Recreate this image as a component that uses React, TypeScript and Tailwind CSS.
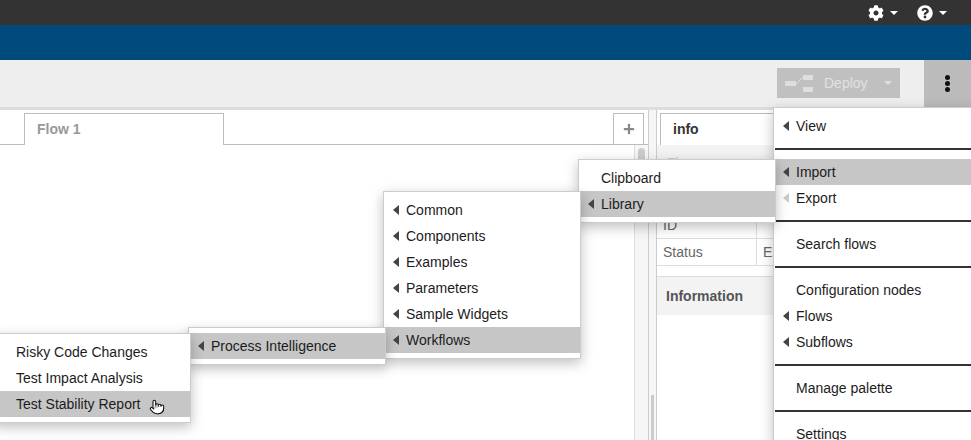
import React from 'react';
import { FaCog, FaQuestionCircle, FaPlus } from 'react-icons/fa';
import { Pointer } from 'lucide-react';

type Item = { label: string; sub?: boolean; active?: boolean; faded?: boolean; cursor?: boolean } | 'divider';

const CaretLeft = ({ className }: { className: string }) => (
  <svg viewBox="0 0 6 10" className={className}>
    <path d="M0 5 L6 0 L6 10 Z" fill="currentColor" />
  </svg>
);

const CaretDown = ({ className }: { className: string }) => (
  <svg viewBox="0 0 10 5" className={className}>
    <path d="M0 0 L10 0 L5 5 Z" fill="currentColor" />
  </svg>
);

const MenuRow = ({ item }: { item: Exclude<Item, 'divider'> }) => (
  <div className={`relative flex h-[26px] items-center pl-[22px] text-[14px] text-[#1c1c1c] ${item.active ? 'bg-[#c6c6c6]' : ''}`}>
    {item.sub && (
      <CaretLeft className={`absolute left-[9px] top-[8px] h-[10px] w-[6px] ${item.faded ? 'text-[#ccc]' : 'text-[#444]'}`} />
    )}
    <span>{item.label}</span>
    {item.cursor && (
      <Pointer className="ml-[8px] mt-[6px] h-[18px] w-[16px] fill-white text-[#111]" strokeWidth={1.6} />
    )}
  </div>
);

const Menu = ({ items, className }: { items: Item[]; className: string }) => (
  <div className={`absolute border border-[#ccc] bg-white py-[5px] shadow-[0_4px_12px_rgba(0,0,0,0.25)] ${className}`}>
    {items.map((item, i) =>
      item === 'divider' ? (
        <div key={i} className="flex h-[20px] items-center pl-[1px]">
          <div className="h-[2px] w-full bg-[#333]" />
        </div>
      ) : (
        <MenuRow key={i} item={item} />
      ),
    )}
  </div>
);

export default function App() {
  return (
    <div className="relative flex h-[440px] w-[971px] flex-col overflow-hidden bg-white font-['Liberation_Sans',Arial,sans-serif]">
      {/* header */}
      <div className="flex h-[25px] items-center justify-end gap-[19px] bg-[#333] pr-[24px] text-white">
        <div className="flex items-center gap-[6px]">
          <FaCog className="h-[16px] w-[16px]" />
          <CaretDown className="h-[4px] w-[8px]" />
        </div>
        <div className="flex items-center gap-[6px]">
          <FaQuestionCircle className="h-[16px] w-[16px]" />
          <CaretDown className="h-[4px] w-[8px]" />
        </div>
      </div>
      <div className="h-[35px] bg-[#004a7c]" />

      {/* toolbar */}
      <div className="flex h-[50px] items-start justify-end border-b-[3px] border-[#ddd] bg-[#eee]">
        <div className="mr-[24px] mt-[8px] flex h-[30px] w-[123px] items-center bg-[#c0c0c0] pl-[8px] text-[14px] text-[#e0e0e0]">
          <svg width="28" height="17" viewBox="0 0 28 17" className="text-[#dedede]">
            <rect x="0" y="6" width="11" height="5" fill="currentColor" />
            <path d="M11 9 L18 2" stroke="currentColor" strokeWidth="1" fill="none" />
            <rect x="18" y="0" width="10" height="5" fill="currentColor" />
            <rect x="18" y="12" width="10" height="5" fill="currentColor" />
          </svg>
          <span className="ml-[11px]">Deploy</span>
          <CaretDown className="ml-[16px] h-[4px] w-[8px]" />
        </div>
        <div className="flex h-[47px] w-[47px] items-center justify-center bg-[#bbb] pb-[1px]">
          <div className="flex flex-col gap-[1px]">
            <div className="h-[5px] w-[5px] rounded-full bg-[#111]" />
            <div className="h-[5px] w-[5px] rounded-full bg-[#111]" />
            <div className="h-[5px] w-[5px] rounded-full bg-[#111]" />
          </div>
        </div>
      </div>

      <div className="flex flex-1">
        {/* workspace */}
        <div className="flex w-[648px] flex-col">
          <div className="flex h-[35px] items-end border-b border-[#bbb] pr-[4px]">
            <div className="ml-[24px] -mb-px flex h-[32px] w-[200px] items-center border border-b-0 border-[#bbb] bg-white pl-[12px] text-[14px] font-bold text-[#999]">
              Flow 1
            </div>
            <div className="ml-auto flex h-[31px] w-[31px] items-center justify-center border border-b-0 border-[#bbb] bg-white text-[#888]">
              <FaPlus className="h-[12px] w-[12px]" />
            </div>
          </div>
          <div className="flex flex-1 justify-end">
            <div className="w-[14px] border-l border-[#ddd] bg-[#f6f6f6] px-[3px] pt-[3px]">
              <div className="h-[60px] rounded-[4px] bg-[#ccc]" />
            </div>
          </div>
        </div>

        {/* separator */}
        <div className="flex w-[9px] flex-col justify-end border-x border-[#ccc] bg-[#f6f6f6] pl-[2px]">
          <div className="h-[45px] w-[3px] bg-[#ccc]" />
        </div>

        {/* sidebar */}
        <div className="flex flex-1 flex-col">
          <div className="h-[35px] pl-[3px] pt-[3px]">
            <div className="flex h-[32px] w-[200px] items-center border border-b-0 border-[#bbb] bg-white pl-[12px] text-[14px] font-bold text-[#333]">
              info
            </div>
          </div>
          <div className="h-[67px] bg-[#f3f3f3] pl-[10px] pt-[8px] text-[14px] text-[#ccc]">Flow</div>
          <div className="h-[27px] border-b border-[#ddd] text-[14px] text-[#666]">
            <div className="flex h-full items-center pl-[6px]">
              <span className="w-[94px] self-stretch border-r border-[#ddd] leading-[26px]">ID</span>
            </div>
          </div>
          <div className="h-[27px] border-b border-[#ddd] text-[14px] text-[#666]">
            <div className="flex h-full items-center pl-[6px]">
              <span className="w-[94px] self-stretch border-r border-[#ddd] leading-[26px]">Status</span>
              <span className="ml-[6px] w-[11px] overflow-hidden whitespace-nowrap">Enabled</span>
            </div>
          </div>
          <div className="mt-[10px] flex h-[39px] items-center border-t border-[#ddd] bg-[#f3f3f3] pl-[9px] text-[14px] font-bold text-[#555]">
            Information
          </div>
        </div>
      </div>

      {/* open menus */}
      <Menu
        className="left-[773px] top-[107px] h-[340px] w-[201px]"
        items={[
          { label: 'View', sub: true },
          'divider',
          { label: 'Import', sub: true, active: true },
          { label: 'Export', sub: true, faded: true },
          'divider',
          { label: 'Search flows' },
          'divider',
          { label: 'Configuration nodes' },
          { label: 'Flows', sub: true },
          { label: 'Subflows', sub: true },
          'divider',
          { label: 'Manage palette' },
          'divider',
          { label: 'Settings' },
        ]}
      />
      <Menu
        className="left-[578px] top-[159px] w-[198px]"
        items={[{ label: 'Clipboard' }, { label: 'Library', sub: true, active: true }]}
      />
      <Menu
        className="left-[383px] top-[191px] w-[198px]"
        items={[
          { label: 'Common', sub: true },
          { label: 'Components', sub: true },
          { label: 'Examples', sub: true },
          { label: 'Parameters', sub: true },
          { label: 'Sample Widgets', sub: true },
          { label: 'Workflows', sub: true, active: true },
        ]}
      />
      <Menu
        className="left-[188px] top-[327px] w-[198px]"
        items={[{ label: 'Process Intelligence', sub: true, active: true }]}
      />
      <Menu
        className="left-[-7px] top-[333px] w-[198px]"
        items={[
          { label: 'Risky Code Changes' },
          { label: 'Test Impact Analysis' },
          { label: 'Test Stability Report', active: true, cursor: true },
        ]}
      />
    </div>
  );
}
